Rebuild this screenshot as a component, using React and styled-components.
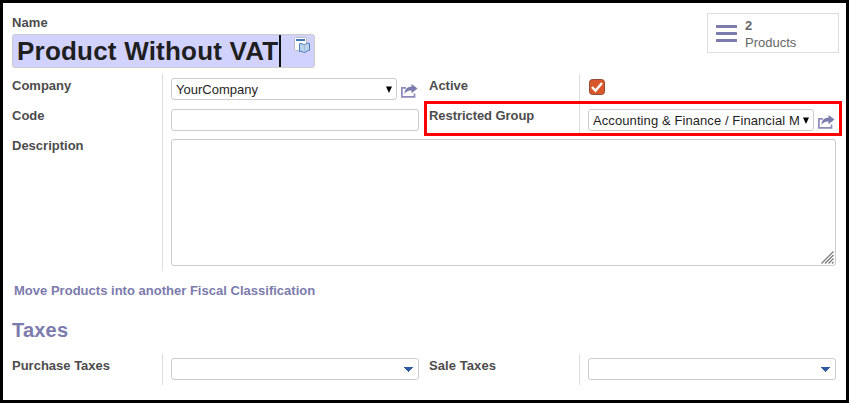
import React from "react";
import styled, { createGlobalStyle } from "styled-components";

const GlobalStyle = createGlobalStyle`
  * { box-sizing: border-box; }
  body { margin: 0; background: #fff; font-family: "Liberation Sans", Arial, sans-serif; font-size: 13px; color: #4c4c4c; }
`;
const Sheet = styled.main`
  position: relative;
  width: 849px;
  height: 403px;
  border: 3px solid #000;
  background: #fff;
  padding: 10px 7px 0 9px;
  overflow: hidden;
`;
const Header = styled.header`
  display: flex;
  justify-content: space-between;
  align-items: flex-start;
  height: 61px;
`;
const Label = styled.label`
  display: block;
  font-weight: bold;
  line-height: 16px;
  padding-top: ${(p) => p.$top ?? 4}px;
  letter-spacing: ${(p) => p.$spacing ?? 0}px;
  white-space: nowrap;
`;
const NameField = styled.div`
  display: flex;
  width: 303px;
  height: 34px;
  margin-top: 3px;
  padding-left: 4px;
  border: 1px solid #ccc;
  border-radius: 3px;
  background: #d2d2ff;
`;
const NameValue = styled.span`
  width: 262px;
  font-size: 26px;
  font-weight: bold;
  line-height: 32px;
  color: #1f1f1f;
  white-space: nowrap;
  letter-spacing: ${(p) => p.$spacing}px;
`;
const Caret = styled.span`
  width: 2px;
  height: 32px;
  background: #111;
`;
const TranslateIcon = styled.svg`
  width: 17px;
  height: 17px;
  margin: 2px 0 0 13px;
`;
const StatButton = styled.div`
  display: flex;
  width: 132px;
  height: 40px;
  border: 1px solid #ddd;
  color: #666;
`;
const Bars = styled.svg`
  width: 21px;
  height: 17px;
  margin: 11px 8px 0 8px;
`;
const StatText = styled.div`
  line-height: 17px;
  padding-top: 3px;
`;
const Group = styled.section`
  display: grid;
  grid-template-columns: 150px 257px 10px 150px 257px;
  grid-template-rows: ${(p) => p.$rows};
`;
const Cell = styled.div`
  display: flex;
  align-items: flex-start;
  border-left: 1px solid #ddd;
  padding: ${(p) => p.$top ?? 5}px 0 0 8px;
  grid-column: ${(p) => p.$column};
  color: #1f1f1f;
`;
const LabelCell = styled.div`
  grid-column: ${(p) => p.$column};
`;
const Box = styled.div`
  display: flex;
  align-items: center;
  justify-content: space-between;
  flex: none;
  width: ${(p) => p.$width ?? 248}px;
  height: ${(p) => p.$height ?? 22}px;
  border: 1px solid #ccc;
  border-radius: 3px;
  background: #fff;
  padding: 0 4px;
  white-space: nowrap;
`;
const TextArea = styled(Box)`
  align-items: flex-end;
  justify-content: flex-end;
  padding: 0 1px 1px;
`;
const SelectText = styled.span`
  letter-spacing: ${(p) => p.$spacing ?? 0}px;
  line-height: 20px;
  padding-top: 1px;
`;
const SelectArrow = styled.svg`
  flex: none;
  width: 6px;
  height: 7px;
  margin-top: 1px;
`;
const ComboArrow = styled.svg`
  width: 9px;
  height: 5px;
  margin: 1px 1px 0 auto;
`;
const OpenIcon = styled.svg`
  width: 17px;
  height: 15px;
  margin: 5px 0 0 4px;
  flex: none;
`;
const Checkbox = styled.svg`
  width: 16px;
  height: 16px;
  margin: 1px 0 0 1px;
`;
const Grip = styled.svg`
  width: 13px;
  height: 13px;
`;
const MoveLink = styled.a`
  display: block;
  margin: 11px 0 0 2px;
  line-height: 18px;
  font-weight: bold;
  color: #7c7bad;
  letter-spacing: ${(p) => p.$spacing}px;
`;
const Heading = styled.h2`
  margin: 18px 0 12px;
  font-size: 20px;
  line-height: 24px;
  color: #7c7bad;
  letter-spacing: ${(p) => p.$spacing}px;
`;
const Highlight = styled.div`
  position: absolute;
  left: 421px;
  top: 98px;
  width: 418px;
  height: 35px;
  border: 3px solid #f00;
  pointer-events: none;
`;

const Open = () => (
  <OpenIcon viewBox="0 0 17 15">
    <path d="M5 4.800H.9V13.800H13.500V10.500" fill="none" stroke="#8d8cb9" strokeWidth="1.700" />
    <path d="M3.500 11C3.500 6.500 6 3.800 10.500 3.800V.9L16.500 5.600 10.500 10.300V7.500C7 7.300 5 8.500 3.500 11Z" fill="#7c7bad" />
  </OpenIcon>
);
const Down = () => (
  <SelectArrow viewBox="0 0 6 7"><path d="M0 .5H6L3 7Z" fill="#000" /></SelectArrow>
);
const Combo = () => (
  <ComboArrow viewBox="0 0 9 5" shapeRendering="crispEdges">
    <path d="M0 0H9V1H8V2H7V3H6V4H5V5H4V4H3V3H2V2H1V1H0Z" fill="#2f5a9e" />
  </ComboArrow>
);

export default function App() {
  return (
    <>
      <GlobalStyle />
      <Sheet>
        <Header>
          <div>
            <Label $top={2} $spacing={0.1}>Name</Label>
            <NameField>
              <NameValue $spacing={0.21}>Product Without VAT</NameValue>
              <Caret />
              <TranslateIcon viewBox="0 0 17 17">
                <rect x=".5" y=".5" width="12" height="13" rx="1" fill="#fff" stroke="#b9bac0" />
                <rect x="2" y="2" width="9" height="2" fill="#3f73b5" />
                <path d="M5.500 6.500C7.500 5.500 8.500 8 10.500 7.500 12.500 7 13 5.500 15.500 6.500V13.500C13.500 12.800 13 15 10.500 15.500 8.500 15.500 8 13.500 5.500 14.500Z" fill="#bcd3ee" stroke="#4d7db9" />
                <path d="M10.500 8V15" stroke="#a3c0e3" />
              </TranslateIcon>
            </NameField>
          </div>
          <StatButton>
            <Bars viewBox="0 0 21 17">
              <g fill="#7c7bad">
                <rect width="21" height="3" rx=".6" />
                <rect y="7" width="21" height="3" rx=".6" />
                <rect y="14" width="21" height="3" rx=".6" />
              </g>
            </Bars>
            <StatText><b>2</b><br />Products</StatText>
          </StatButton>
        </Header>

        <Group $rows="30px 30px 137px">
          <LabelCell $column={1}><Label>Company</Label></LabelCell>
          <Cell $column={2} $top={4}>
            <Box $width={226}><SelectText>YourCompany</SelectText><Down /></Box>
            <Open />
          </Cell>
          <LabelCell $column={4}><Label>Active</Label></LabelCell>
          <Cell $column={5} $top={4}>
            <Checkbox viewBox="0 0 16 16">
              <rect x=".5" y=".5" width="15" height="15" rx="3" fill="#d9582b" stroke="#944b32" />
              <path d="M3 8 6.500 11.800 13 4" fill="none" stroke="#fff" strokeWidth="2.400" />
            </Checkbox>
          </Cell>
          <LabelCell $column={1}><Label>Code</Label></LabelCell>
          <Cell $column={2}><Box /></Cell>
          <LabelCell $column={4}><Label $spacing={-0.06}>Restricted Group</Label></LabelCell>
          <Cell $column={5}>
            <Box $width={226}><SelectText $spacing={0.09}>Accounting &amp; Finance / Financial M</SelectText><Down /></Box>
            <Open />
          </Cell>
          <LabelCell $column={1}><Label>Description</Label></LabelCell>
          <Cell $column="2 / 6">
            <TextArea $width={665} $height={127}>
              <Grip viewBox="0 0 13 13">
                <path d="M.5 12.500 12.500 .5M4 12.500 12.500 4M7.500 12.500 12.500 7.500M11 12.500 12.500 11" stroke="#777" strokeWidth="1.200" />
              </Grip>
            </TextArea>
          </Cell>
        </Group>

        <MoveLink $spacing={0.015}>Move Products into another Fiscal Classification</MoveLink>
        <Heading $spacing={0.2}>Taxes</Heading>
        <Group $rows="31px">
          <LabelCell $column={1}><Label>Purchase Taxes</Label></LabelCell>
          <Cell $column={2} $top={4}><Box><Combo /></Box></Cell>
          <LabelCell $column={4}><Label $spacing={0.08}>Sale Taxes</Label></LabelCell>
          <Cell $column={5} $top={4}><Box><Combo /></Box></Cell>
        </Group>
        <Highlight />
      </Sheet>
    </>
  );
}
